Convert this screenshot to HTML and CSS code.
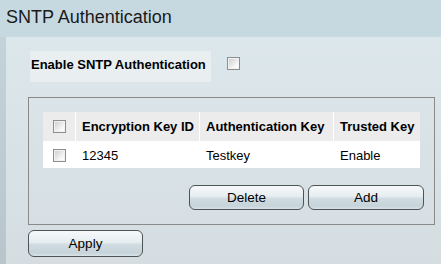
FILE: index.html
```html
<html>
<head>
	<link rel="stylesheet" href="styles.css">
</head>
<body>
	<div class="title-bar">
		<h1 class="title">SNTP Authentication</h1>
	</div>
	<div class="page">
		<div class="side"></div>
		<div class="panel">
			<div class="enable-row">
				<div class="enable-label">Enable SNTP Authentication</div>
				<input type="checkbox" class="check enable-check" />
			</div>
			<div class="key-box">
				<table class="key-table">
					<tr class="head">
						<th class="col-check"><input type="checkbox" class="check" /></th>
						<th class="col-id">Encryption Key ID</th>
						<th class="col-key">Authentication Key</th>
						<th class="col-trust">Trusted Key</th>
					</tr>
					<tr class="row">
						<td class="col-check"><input type="checkbox" class="check" /></td>
						<td>12345</td>
						<td>Testkey</td>
						<td>Enable</td>
					</tr>
				</table>
				<div class="table-buttons">
					<button class="btn btn-delete">Delete</button>
					<button class="btn btn-add">Add</button>
				</div>
			</div>
			<button class="btn btn-apply">Apply</button>
		</div>
	</div>
</body>
</html>
```

FILE: styles.css
```css
body {
	margin: 0;
	font-family: "Liberation Sans", Arial, sans-serif;
	color: #000;
	width: 441px;
	height: 264px;
	overflow: hidden;
}

.title-bar {
	height: 37px;
	box-sizing: border-box;
	padding: 7px 0 0 6px;
	background: #c6d9e1;
}
.title {
	margin: 0;
	font-size: 18px;
	font-weight: normal;
	color: #1a1a1a;
}

.page {
	display: flex;
	height: 227px;
}
.side {
	width: 6px;
	background: linear-gradient(#c3d3da, #b8c6cc);
}
.panel {
	flex: 1;
	padding: 14px 0 0 22px;
	background: linear-gradient(#dce7ec, #d5dde1);
}

.enable-row {
	display: flex;
	align-items: flex-start;
	margin-left: 2px;
}
.enable-label {
	padding: 6px 5px 10px 1px;
	line-height: 15px;
	font-size: 13px;
	font-weight: bold;
	background: #e9eef0;
}
.enable-check {
	margin: 6px 0 0 16px;
}

.check {
	-webkit-appearance: none;
	appearance: none;
	display: block;
	width: 13px;
	height: 13px;
	margin: 0 auto;
	box-sizing: border-box;
	border: 1px solid #8c8d8d;
	background: linear-gradient(135deg, #c9caca, #f7f7f7 70%, #ffffff);
	box-shadow: inset 0 0 0 1px #f2f2f2;
}
.enable-check {
	margin: 6px 0 0 16px;
}

.key-box {
	margin-top: 15px;
	width: 407px;
	box-sizing: border-box;
	border: 1px solid #8a8a8a;
	padding: 14px 0 14px 14px;
}

.key-table {
	border-collapse: separate;
	border-spacing: 0;
	font-size: 13px;
}
.key-table th,
.key-table td {
	padding: 0 0 0 6px;
	text-align: left;
	vertical-align: middle;
}
.key-table th + th,
.key-table td + td {
	border-left: 1px solid #fff;
}
.key-table .col-check {
	padding: 0;
}
.head th {
	height: 29px;
	background: #ececec;
	font-weight: bold;
}
.row td {
	height: 27px;
	border-top: 1px solid #fff;
	background: #fff;
}
.col-check { width: 32px; }
.col-id { width: 117px; }
.col-key { width: 127px; }
.col-trust { width: 80px; }

.table-buttons {
	display: flex;
	gap: 4px;
	margin: 17px 0 0 146px;
}

.btn {
	height: 25px;
	box-sizing: border-box;
	border: 1px solid #4e5355;
	border-radius: 6px;
	padding: 0;
	font-family: "Liberation Sans", Arial, sans-serif;
	font-size: 13.5px;
	color: #000;
	background: linear-gradient(#f6f9fa 0%, #e6edf0 45%, #cfdbe0 55%, #c6d4da 88%, #d9e3e7 100%);
}
.btn-delete { width: 115px; }
.btn-add { width: 116px; }
.btn-apply {
	display: block;
	width: 115px;
	height: 27px;
	margin-top: 5px;
}
```
